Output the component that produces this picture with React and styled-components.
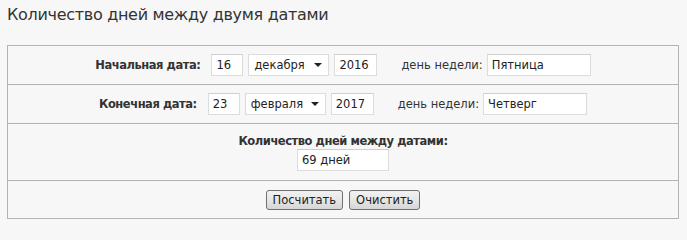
import styled, { createGlobalStyle } from "styled-components";

const GlobalStyle = createGlobalStyle`
	body {
		margin: 0;
		background: #f7f7f7;
		font-family: "DejaVu Sans", Verdana, sans-serif;
		color: #333;
	}
`;

const Page = styled.div`
	padding: 4px 7px 0 7px;
	width: 672px;
`;

const Title = styled.h1`
	margin: 0 0 19px 0;
	font-size: 16px;
	font-weight: normal;
	line-height: 22px;
	color: #333;
	letter-spacing: -0.3px;
`;

const Table = styled.div`
	border: 1px solid #b4b4b4;
	background: #f7f7f7;
`;

const Row = styled.div`
	display: flex;
	align-items: center;
	justify-content: center;
	flex-direction: ${(p) => (p.$column ? "column" : "row")};
	height: ${(p) => p.$height}px;
	box-sizing: border-box;
	gap: ${(p) => (p.$column ? "1px" : "0")};
	font-size: 11.5px;

	&:not(:last-child) {
		border-bottom: 1px solid #b4b4b4;
	}
`;

const Label = styled.span`
	font-weight: bold;
	color: #333;
	letter-spacing: -0.45px;
	margin-right: ${(p) => p.$mr ?? 0}px;
`;

const Text = styled.span`
	color: #333;
	margin: 0 4px 0 24px;
`;

const Field = styled.input`
	box-sizing: border-box;
	width: ${(p) => p.$w}px;
	height: 22px;
	margin-left: ${(p) => p.$ml ?? 0}px;
	padding: 0 4px;
	border: 1px solid #dcdcdc;
	border-top-color: #cfcfcf;
	background: #fff;
	font-family: inherit;
	font-size: 11.5px;
	color: #222;
	outline: none;
`;

const SelectWrap = styled.div`
	position: relative;
	width: 81px;
	height: 22px;
	margin-left: 5px;
`;

const Select = styled.select`
	appearance: none;
	box-sizing: border-box;
	width: 100%;
	height: 100%;
	padding: 0 0 0 5px;
	border: 1px solid #dcdcdc;
	background: #fff;
	font-family: inherit;
	font-size: 11.5px;
	color: #222;
	outline: none;
`;

const Arrow = styled.svg`
	position: absolute;
	right: 7px;
	top: 9px;
	pointer-events: none;
`;

const Button = styled.button`
	box-sizing: border-box;
	height: 20px;
	padding: 0 6px;
	margin: 0 3px;
	border: 1px solid #707070;
	border-radius: 3px;
	background: linear-gradient(#f2f2f2, #e6e6e6 50%, #d6d6d6);
	font-family: inherit;
	font-size: 11.5px;
	color: #222;
`;

function MonthSelect({ value }) {
	return (
		<SelectWrap>
			<Select defaultValue={value}>
				<option>{value}</option>
			</Select>
			<Arrow width="8" height="4" viewBox="0 0 8 4">
				<path d="M0 0H8L4 4Z" fill="#222" />
			</Arrow>
		</SelectWrap>
	);
}

function DateRow({ label, day, month, year, weekday }) {
	return (
		<Row $height={39}>
			<Label $mr={11}>{label}</Label>
			<Field $w={32} defaultValue={day} />
			<MonthSelect value={month} />
			<Field $w={43} $ml={5} defaultValue={year} />
			<Text>день недели:</Text>
			<Field $w={104} defaultValue={weekday} />
		</Row>
	);
}

export default function App() {
	return (
		<>
			<GlobalStyle />
			<Page>
				<Title>Количество дней между двумя датами</Title>
				<Table>
					<DateRow
						label="Начальная дата:"
						day="16"
						month="декабря"
						year="2016"
						weekday="Пятница"
					/>
					<DateRow
						label="Конечная дата:"
						day="23"
						month="февраля"
						year="2017"
						weekday="Четверг"
					/>
					<Row $height={57} $column>
						<Label>Количество дней между датами:</Label>
						<Field $w={92} defaultValue="69 дней" />
					</Row>
					<Row $height={37}>
						<Button>Посчитать</Button>
						<Button>Очистить</Button>
					</Row>
				</Table>
			</Page>
		</>
	);
}
